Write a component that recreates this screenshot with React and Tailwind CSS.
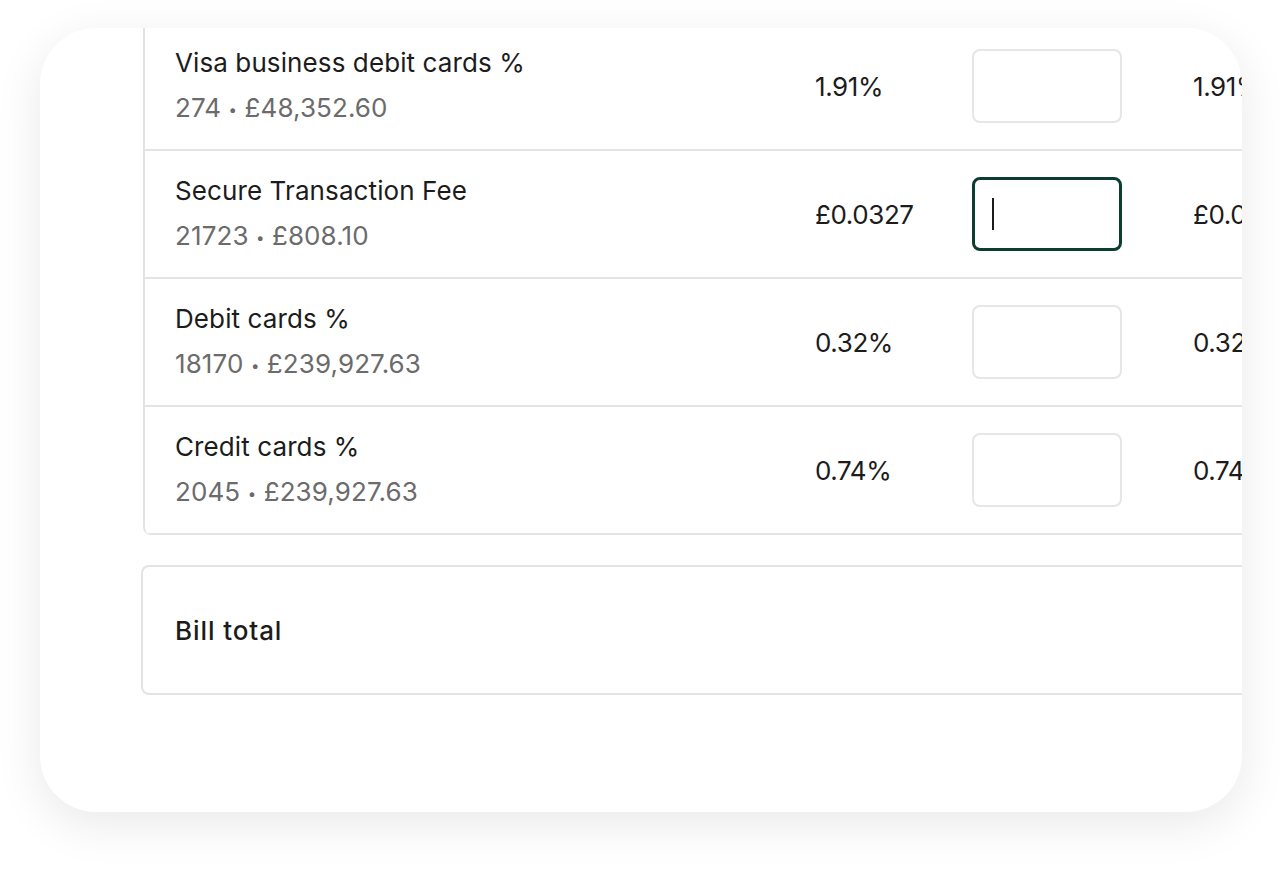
const rows = [
  { name: "Visa business debit cards %", count: "274", amount: "£48,352.60", rate: "1.91%", next: "1.91%" },
  { name: "Secure Transaction Fee", count: "21723", amount: "£808.10", rate: "£0.0327", next: "£0.0327", focused: true },
  { name: "Debit cards %", count: "18170", amount: "£239,927.63", rate: "0.32%", next: "0.32%" },
  { name: "Credit cards %", count: "2045", amount: "£239,927.63", rate: "0.74%", next: "0.74%" },
];

function RateInput({ focused }) {
  if (focused) {
    return (
      <div className="flex h-[74px] w-[150px] shrink-0 items-center rounded-[8px] border-[3px] border-[#0b3d30] bg-white pl-[17px]">
        <span className="h-[32px] w-[2px] bg-[#1c1c1c]" />
      </div>
    );
  }
  return <div className="h-[74px] w-[150px] shrink-0 rounded-[8px] border-2 border-[#e6e6e6] bg-white" />;
}

export default function App() {
  return (
    <div
      className="min-h-screen w-[1282px] bg-white pt-[28px] pl-[40px]"
      style={{ fontFamily: "Inter, 'Noto Sans', sans-serif" }}
    >
      <div className="h-[784px] w-[1202px] overflow-hidden rounded-[56px] bg-white shadow-[0_12px_48px_rgba(0,0,0,0.09)]">
        <div className="-mt-[5px] pl-[103px]">
          <div className="w-[1200px] overflow-hidden rounded-bl-[8px] border-l-2 border-[#e3e3e3]">
            {rows.map((row) => (
              <div key={row.name} className="flex h-[128px] items-center border-b-2 border-[#e3e3e3]">
                <div className="flex w-[638px] shrink-0 flex-col gap-[8px] self-start pl-[30px] pt-[22px]">
                  <div className="text-[26px] leading-[36px] tracking-[0.1px] text-[#1c1c1c]">{row.name}</div>
                  <div className="text-[26px] leading-[38px] tracking-[0.1px] text-[#6b6b6b]">
                    {row.count} <span className="relative -top-[2px] text-[15px]">•</span> {row.amount}
                  </div>
                </div>
                <div className="w-[189px] shrink-0 pl-[32px] text-[26px] tracking-[-0.4px] text-[#1c1c1c]">{row.rate}</div>
                <RateInput focused={row.focused} />
                <div className="shrink-0 whitespace-nowrap pl-[71px] text-[26px] tracking-[-0.4px] text-[#1c1c1c]">{row.next}</div>
              </div>
            ))}
          </div>
          <div className="-ml-[2px] mt-[30px] flex h-[130px] w-[1200px] items-center rounded-l-[8px] border-2 border-r-0 border-[#e3e3e3] pl-[32px]">
            <span className="text-[26px] font-medium tracking-[0.9px] text-[#1c1c1c]">Bill total</span>
          </div>
        </div>
      </div>
    </div>
  );
}
